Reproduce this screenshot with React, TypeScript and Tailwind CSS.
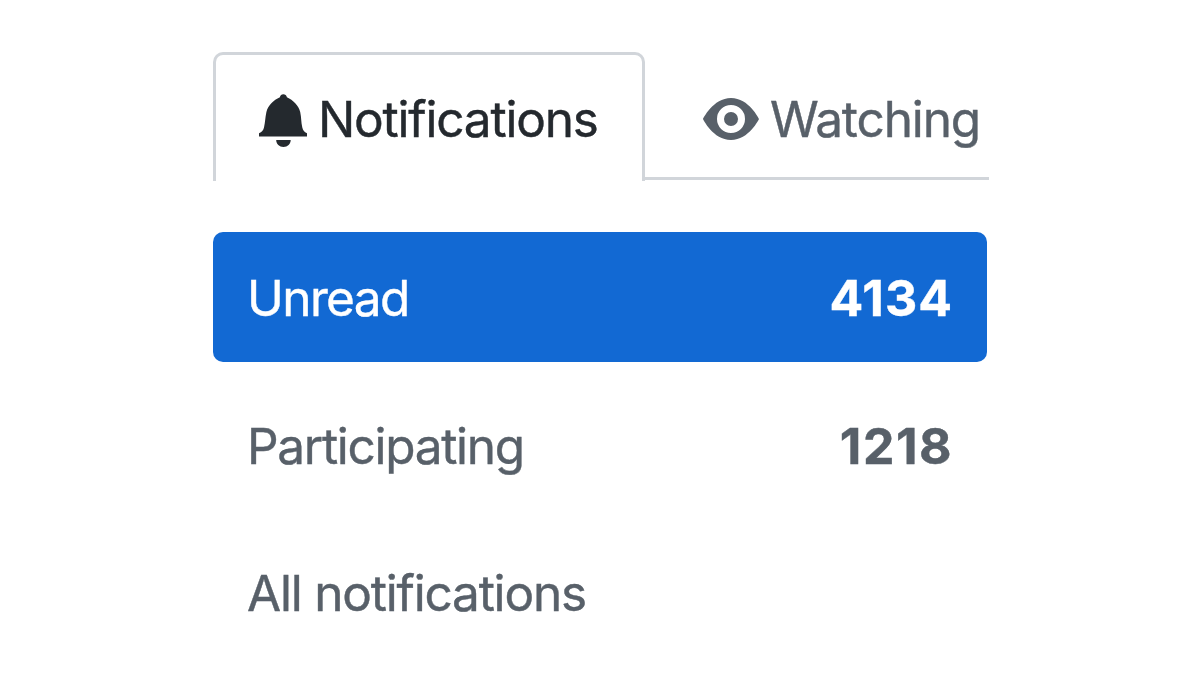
export default function App() {
  return (
    <main className="flex h-[675px] w-[1200px] flex-col overflow-hidden bg-white pl-[213px] pt-[52px] font-['Inter',sans-serif] text-[#586069] [-webkit-text-stroke:0.4px_currentColor]">
      <nav className="flex h-[129px] w-[776px] shrink-0 items-start">
        <a className="flex h-[129px] w-[432px] shrink-0 items-start rounded-t-[10px] border-3 border-b-0 border-[#d1d5da] pl-[43px] text-[#24292e]">
          <svg viewBox="0 0 48 54" className="mt-[39px] h-[54px] w-[48px] shrink-0" fill="currentColor" stroke="none">
            <path d="M24.300.300C22.500.300 21.200 1.500 20.900 3.300C14.500 6 9 11.500 7.400 18C6.100 24 6.300 28 5 33.500C4.300 36.500 2.800 38 0 39.200V42.500H48V39.200C45.300 38 44 36.500 43.300 33.500C42 28 42.500 24 41.200 18C39.600 11.500 34.100 6 27.900 3.300C27.600 1.500 26.100.300 24.300.300ZM17.200 46C17.200 50 20.400 53 24.500 53S31.700 50 31.700 46Z" />
          </svg>
          <span className="ml-[11px] mt-[34px] text-[49.5px] leading-[60px] tracking-[-1.2px]">Notifications</span>
        </a>
        <a className="flex h-[128px] grow items-start border-b-3 border-[#d1d5da] pl-[58px]">
          <svg viewBox="0 0 56 42" className="mt-[46px] h-[42px] w-[56px] shrink-0" fill="currentColor" fillRule="evenodd" stroke="none">
            <path d="M28 0C10 0 0 21 0 21s10 21 28 21s28-21 28-21S46 0 28 0zm0 35a14 14 0 1 1 0-28a14 14 0 0 1 0 28zm0-7a7 7 0 1 0 0-14a7 7 0 0 0 0 14z" />
          </svg>
          <span className="ml-[11px] mt-[37px] text-[49.5px] leading-[60px] tracking-[-1.1px]">Watching</span>
        </a>
      </nav>
      <section className="mt-[51px] flex w-[774px] flex-col gap-[18px] text-[49.5px] leading-[60px]">
        <a className="flex h-[130px] items-center justify-between rounded-[10px] bg-[#1269d3] pl-[34px] pr-[34px] pt-[1px] text-white">
          <span className="tracking-[-1.6px]">Unread</span><span className="text-[50px] font-[650] tracking-[1px]">4134</span>
        </a>
        <a className="flex h-[130px] items-center justify-between pl-[34px] pr-[34px] pt-[1px]">
          <span className="tracking-[-1.3px]">Participating</span><span className="text-[50px] font-[650] tracking-[1.5px]">1218</span>
        </a>
        <a className="flex h-[130px] items-center pl-[34px] pr-[36px]">
          <span className="tracking-[-1.2px]">All notifications</span>
        </a>
      </section>
    </main>
  );
}
